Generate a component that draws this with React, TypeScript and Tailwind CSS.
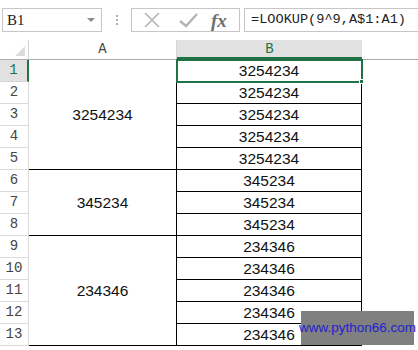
import React from 'react';

const GREEN = '#217346';

const groups = [
  { value: '3254234', rows: 5 },
  { value: '345234', rows: 3 },
  { value: '234346', rows: 5 },
];

const cellFont = { fontFamily: '"Liberation Sans", Arial, sans-serif' };
const simFont = { fontFamily: '"Liberation Mono", "DejaVu Sans Mono", monospace' };

export default function App() {
  const bValues: string[] = [];
  groups.forEach((g) => {
    for (let i = 0; i < g.rows; i++) bValues.push(g.value);
  });

  let startRow = 1;
  const merged = groups.map((g) => {
    const item = { ...g, start: startRow };
    startRow += g.rows;
    return item;
  });

  return (
    <div className="relative w-[418px] h-[350px] overflow-hidden bg-white text-black">
      {/* toolbar */}
      <div className="flex h-[40px] pt-[8px]">
        <div className="ml-[2px] flex h-[24px] w-[100px] items-center justify-between border border-[#c6c6c6] pl-[4px] pr-[6px]">
          <span className="text-[15px] text-[#222]" style={{ fontFamily: '"Liberation Serif", serif' }}>
            B1
          </span>
          <span className="h-0 w-0 border-x-[4px] border-t-[4px] border-x-transparent border-t-[#8a8a8a]" />
        </div>
        <div className="ml-[14px] flex h-[24px] flex-col justify-center gap-[2px]">
          <span className="h-[2px] w-[2px] bg-[#b0b0b0]" />
          <span className="h-[2px] w-[2px] bg-[#b0b0b0]" />
          <span className="h-[2px] w-[2px] bg-[#b0b0b0]" />
        </div>
        <div className="ml-[13px] flex h-[24px] w-[109px] items-center border border-[#c6c6c6]">
          <svg width="22" height="18" viewBox="0 0 22 18" className="ml-[9px]">
            <path d="M4 2 L18 16 M18 2 L4 16" stroke="#b4b4b4" strokeWidth="1.6" fill="none" />
          </svg>
          <svg width="22" height="18" viewBox="0 0 22 18" className="ml-[14px]">
            <path d="M3 10 L9 15 L20 3" stroke="#b4b4b4" strokeWidth="2.4" fill="none" />
          </svg>
          <span
            className="ml-[12px] text-[19px] font-bold italic leading-none text-[#6e6e6e]"
            style={{ fontFamily: '"Liberation Serif", serif' }}
          >
            fx
          </span>
        </div>
        <div className="ml-[4px] flex h-[24px] flex-1 items-center border border-r-0 border-[#c6c6c6] pl-[6px]">
          <span className="text-[13.6px] text-[#222] whitespace-nowrap" style={simFont}>
            =LOOKUP(9^9,A$1:A1)
          </span>
        </div>
      </div>

      {/* column headers */}
      <div className="flex h-[20px] border-b border-[#ababab]">
        <div className="relative w-[29px] border-r border-[#d4d4d4]">
          <svg width="10" height="10" viewBox="0 0 10 10" className="absolute bottom-[3px] right-[3px]">
            <path d="M10 0 L10 10 L0 10 Z" fill="#dcdcdc" />
          </svg>
        </div>
        <div
          className="flex w-[148px] items-center justify-center border-r border-[#d4d4d4] text-[14px] text-[#444]"
          style={simFont}
        >
          A
        </div>
        <div
          className="flex w-[185px] items-center justify-center bg-[#e1e1e1] text-[14px]"
          style={{ ...simFont, color: GREEN, boxShadow: `inset 0 -2px 0 ${GREEN}` }}
        >
          B
        </div>
        <div className="flex-1" />
      </div>

      {/* grid */}
      <div className="relative grid grid-cols-[29px_148px_185px_1fr] grid-rows-[repeat(13,22px)]">
        {bValues.map((_, i) => (
          <div
            key={`h${i}`}
            className={`flex items-center justify-center border-b border-r text-[14px] ${
              i === 0 ? 'bg-[#e1e1e1] border-b-[#d4d4d4] border-r-[#217346] border-r-2' : 'border-[#dadada] text-[#444]'
            }`}
            style={{ ...simFont, gridColumn: 1, gridRow: i + 1, color: i === 0 ? GREEN : undefined }}
          >
            {i + 1}
          </div>
        ))}
        {merged.map((g) => (
          <div
            key={`a${g.start}`}
            className="flex items-center justify-center border-b border-r border-black text-[15.5px] text-[#111]"
            style={{ ...cellFont, gridColumn: 2, gridRow: `${g.start} / span ${g.rows}` }}
          >
            {g.value}
          </div>
        ))}
        {bValues.map((v, i) => (
          <div
            key={`b${i}`}
            className="flex items-center justify-center border-b border-r border-black text-[15.5px] text-[#111]"
            style={{ ...cellFont, gridColumn: 3, gridRow: i + 1 }}
          >
            {v}
          </div>
        ))}

        {/* selection on B1 */}
        <div className="pointer-events-none absolute left-[176px] top-[-1px] h-[24px] w-[187px] border-2 border-[#217346]" />
        <div className="pointer-events-none absolute left-[359px] top-[19px] h-[5px] w-[5px] border border-white bg-[#217346]" />
      </div>

      {/* watermark */}
      <div className="absolute left-[301px] top-[311px] flex h-[34px] w-[113px] items-center justify-center bg-[#808080]">
        <span className="text-[13.5px] text-[#1f1fd0]" style={cellFont}>
          www.python66.com
        </span>
      </div>
    </div>
  );
}
